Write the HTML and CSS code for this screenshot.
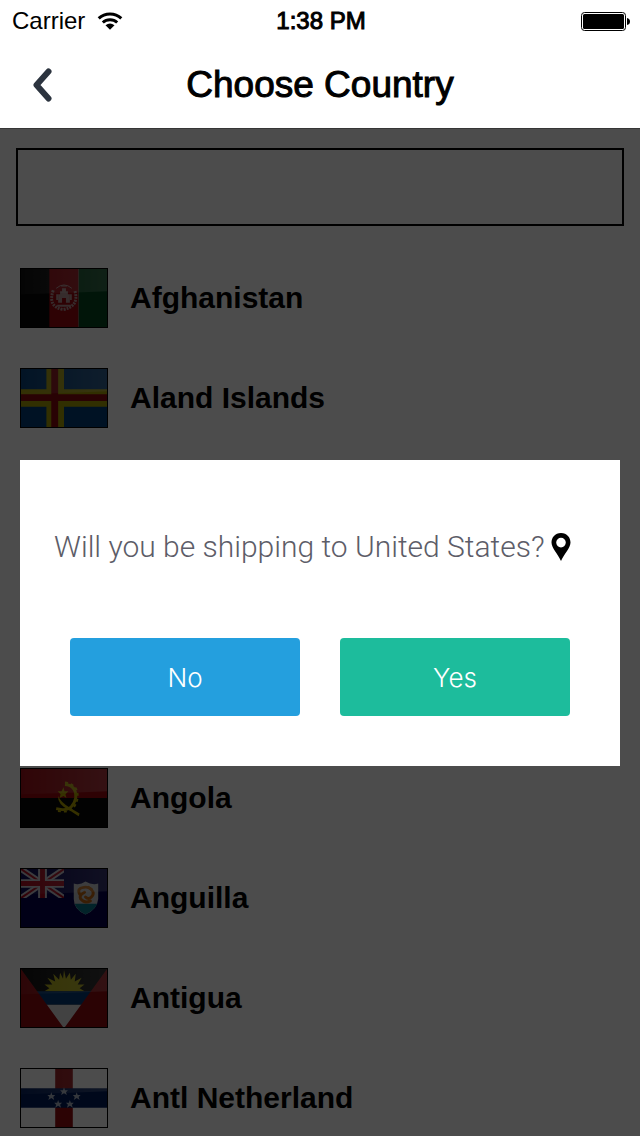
FILE: index.html
```html
<!DOCTYPE html>
<html lang="en">
<head>
<meta charset="utf-8">
<meta name="viewport" content="width=device-width">
<title>Choose Country</title>
<link rel="stylesheet" href="styles.css">
</head>
<body>
<header class="header">
  <div class="status">
    <div class="status-left">
      <span>Carrier</span>
      <svg class="wifi" viewBox="0 0 25 18" aria-hidden="true"><g fill="none" stroke="#000" stroke-width="3"><path d="M1.200 6.400C7.500.400 17.500.400 23.800 6.400"/><path d="M5.300 10.500C9.300 6.800 15.700 6.800 19.700 10.500"/></g><path d="M8 13.200Q12.500 9.600 17 13.200L12.500 17.800Z"/></svg>
    </div>
    <span class="time">1:38 PM</span>
    <svg class="battery" viewBox="0 0 50 20" aria-hidden="true"><rect x="1.500" y="1.500" width="44" height="18" rx="3" fill="none" stroke="#000"/><rect x="3" y="3" width="41" height="15" rx="1.500"/><path d="M47 7Q50 7.500 50 10.500Q50 13.500 47 14Z"/></svg>
  </div>
  <div class="nav">
    <button class="back" type="button" aria-label="Back"><svg viewBox="0 0 20 34" aria-hidden="true"><path d="M16.500 3.500L4.500 17L16.500 30.500" fill="none" stroke="#2c343f" stroke-width="6" stroke-linecap="round" stroke-linejoin="round"/></svg></button>
    <h1 class="title">Choose Country</h1>
  </div>
</header>
<main class="content">
  <svg class="defs" aria-hidden="true"><defs><linearGradient id="gloss" x1="0" y1="0" x2="1" y2="0"><stop offset="0" stop-color="#fff" stop-opacity=".04"/><stop offset="1" stop-color="#fff" stop-opacity=".2"/></linearGradient></defs></svg>
  <input class="search" type="text" aria-label="Search countries">
  <ul class="countries">
    <li class="country">
      <svg class="flag" viewBox="0 0 88 60" preserveAspectRatio="none" aria-hidden="true"><path fill="#080808" d="M0 0h30v60H0z"/><path fill="#9b0710" d="M29 0h30v60H29z"/><path fill="#04491f" d="M59 0h29v60H59z"/>
        <g fill="none" stroke="#b49494" stroke-width="3"><path stroke-dasharray="2 1" d="M33 22Q27 39 43 42Q60 39 55 22"/><path stroke-width="1" d="M36 20Q44 13 52 20"/></g><g fill="#b49494"><path d="M38 35V26h2v-3h2v-3h4v3h2v3h2v9h-4v-5h-4v5Z"/><path d="M36 26h2v6h-2zM50 26h2v6h-2zM41 17h6v1h-6zM37 37h14v2H37z"/></g>
        <path fill="url(#gloss)" d="M0 0H88V23Q44 25 0 26Z"/></svg>
      <span class="name">Afghanistan</span>
    </li>
    <li class="country">
      <svg class="flag" viewBox="0 0 88 60" preserveAspectRatio="none" aria-hidden="true"><path fill="#003c78" d="M0 0h88v60H0z"/><path fill="#a69d06" d="M26 0h18v21h44v18H44v21H26V39H0V21h26z"/><path fill="#8b0710" d="M31 0h7v26h50v7H38v27h-7V33H0v-7h31z"/><path fill="url(#gloss)" d="M0 0H88V23Q44 25 0 26Z"/></svg>
      <span class="name">Aland Islands</span>
    </li>
    <li class="country"></li>
    <li class="country"></li>
    <li class="country"></li>
    <li class="country">
      <svg class="flag" viewBox="0 0 88 60" preserveAspectRatio="none" aria-hidden="true"><path fill="#9b0810" d="M0 0h88v30H0z"/><path fill="#090909" d="M0 30h88v30H0z"/><path fill="none" stroke="#b5a500" stroke-width="3" d="M45 16Q57 17 56 30Q53 43 42 42L36 41"/><path fill="none" stroke="#b5a500" stroke-width="2" stroke-dasharray="3 3" d="M45 14Q59 16 58 30Q55 45 42 44L35 43"/><path fill="#b5a500" d="M38 28Q41 35 50 40L60 46L59 49L50 43Q37 37 38 28ZM43.500 19l1 4h4l-3 3 1 4-3-2-4 2 1-4-3-3h4Z"/><path fill="url(#gloss)" d="M0 0H88V23Q44 25 0 26Z"/></svg>
      <span class="name">Angola</span>
    </li>
    <li class="country">
      <svg class="flag" viewBox="0 0 88 60" preserveAspectRatio="none" aria-hidden="true"><path fill="#05034f" d="M0 0h88v60H0z"/><svg width="44" height="30" viewBox="0 0 44 30"><path stroke="#c5c5cf" stroke-width="6" d="M0 0L44 30M44 0L0 30"/><path stroke="#a9071c" stroke-width="2" d="M0 0L44 30M44 0L0 30"/><path stroke="#c5c5cf" stroke-width="9" d="M22 0V30M0 15H44"/><path stroke="#a9071c" stroke-width="5" d="M22 0V30M0 15H44"/></svg>
        <path fill="#c2c5c9" d="M54 15Q60 17 66 13Q73 17 79 15V31Q78 42 66 47Q54 42 54 31Z"/><path fill="#08758a" d="M55 36H78Q75 43 66 47Q57 43 55 36Z"/><g fill="none" stroke="#be6612" stroke-width="3" stroke-linecap="round"><path d="M60 26Q57 20 64 19Q69 18 72 21"/><path d="M69 19Q77 24 72 29Q69 32 66 29"/><path d="M71 33Q65 36 61 31Q59 27 65 24"/></g><path fill="url(#gloss)" d="M0 0H88V23Q44 25 0 26Z"/></svg>
      <span class="name">Anguilla</span>
    </li>
    <li class="country">
      <svg class="flag" viewBox="0 0 88 60" preserveAspectRatio="none" aria-hidden="true"><path fill="#080808" d="M0 0h88v60H0z"/><path fill="#b2ac0b" d="M24 23L29 20L24 16L32 16L27 9L35 13L33 5L39 11L40 4L43 10L44 1L46 10L50 4L51 11L56 5L55 13L62 9L58 16L65 16L60 20L65 23Z"/><path fill="#063b77" d="M0 23h88v14H0z"/><path fill="#dedede" d="M0 37h88v23H0z"/><path fill="#920b10" d="M0 0L43 60H0zM88 0L45 60H88z"/><path fill="url(#gloss)" d="M0 0H88V23Q44 25 0 26Z"/></svg>
      <span class="name">Antigua</span>
    </li>
    <li class="country">
      <svg class="flag" viewBox="0 0 88 60" preserveAspectRatio="none" aria-hidden="true"><path fill="#fff" d="M0 0h88v60H0z"/><path fill="#930b10" d="M35 0h18v60H35z"/><path fill="#001c5c" d="M0 20h88v20H0z"/><g fill="#aeb8c8"><path id="star" d="M44 19l1 3h3l-2 2 1 3-3-2-3 2 1-3-2-2h3Z"/><use href="#star" x="-13" y="5"/><use href="#star" x="13" y="5"/><use href="#star" x="-6" y="13"/><use href="#star" x="6" y="13"/></g><path fill="url(#gloss)" d="M0 0H88V23Q44 25 0 26Z"/></svg>
      <span class="name">Antl Netherland</span>
    </li>
  </ul>
  <div class="overlay">
    <section class="dialog" role="dialog" aria-modal="true" aria-labelledby="question">
      <div class="message">
        <p class="question" id="question">Will you be shipping to United States?</p>
        <svg class="pin" viewBox="0 0 20 28" aria-hidden="true"><path fill-rule="evenodd" d="M10 0C4 0 .500 4.500 .500 9.500C.500 15 7 21 10 28C13 21 19.500 15 19.500 9.500C19.500 4.500 16 0 10 0ZM10 4.800A4.800 4.800 0 1 1 10 14.400A4.800 4.800 0 1 1 10 4.800Z"/></svg>
      </div>
      <div class="actions">
        <button class="action no" type="button">No</button>
        <button class="action yes" type="button">Yes</button>
      </div>
    </section>
  </div>
</main>
</body>
</html>
```

FILE: styles.css
```css
* { box-sizing: border-box; }
html, body { height: 100%; }
body {
  margin: 0;
  display: flex;
  flex-direction: column;
  overflow: hidden;
  background: #fff;
  color: #000;
  font-family: "Liberation Sans", Arial, sans-serif;
}
.header { flex: none; }
.status {
  display: grid;
  grid-template-columns: 1fr auto 1fr;
  align-items: center;
  height: 42px;
  padding: 0 10px 0 12px;
  font-size: 24px;
  line-height: 40px;
}
.status-left { display: flex; align-items: center; gap: 12px; }
.wifi { width: 26px; height: 18px; }
.time { -webkit-text-stroke: 1px #000; }
.battery { width: 50px; height: 20px; justify-self: end; }
.nav {
  display: grid;
  grid-template-columns: 64px 1fr 64px;
  align-items: center;
  height: 86px;
}
.back {
  display: flex;
  align-items: center;
  height: 86px;
  padding: 0 0 0 32px;
  border: 0;
  background: none;
}
.back svg { width: 20px; height: 34px; }
.title {
  margin: 0;
  text-align: center;
  font-size: 37px;
  font-weight: 400;
  line-height: 44px;
  -webkit-text-stroke: 1px #000;
}
.content {
  position: relative;
  flex: 1;
  min-height: 0;
  overflow: hidden;
  padding: 19px 16px 0;
  border-top: 1px solid #363636;
}
.defs { position: absolute; width: 0; height: 0; }
.search {
  display: block;
  width: 100%;
  height: 78px;
  padding: 0 16px;
  border: 2px solid #000;
  border-radius: 0;
  background: #fff;
  font: 30px "Liberation Sans", Arial, sans-serif;
}
.countries { margin: 22px 0 0; padding: 0 4px; list-style: none; }
.country { display: flex; align-items: center; gap: 22px; height: 100px; }
.flag { width: 88px; height: 60px; border: 1px solid #000; }
.name { font-size: 30px; font-weight: 700; line-height: 40px; }
.overlay {
  position: absolute;
  inset: 0;
  padding: 331px 20px 0;
  background: rgba(0, 0, 0, 0.7);
}
.dialog { padding: 66px 34px 50px; background: #fff; }
.message { display: flex; align-items: center; gap: 6px; margin-bottom: 70px; }
.question {
  margin: 0;
  color: #5d5d68;
  font-family: Roboto, "Liberation Sans", sans-serif;
  font-size: 30px;
  font-weight: 300;
  line-height: 42px;
  white-space: nowrap;
}
.pin { flex: none; width: 20px; height: 28px; }
.actions { display: grid; grid-template-columns: 1fr 1fr; gap: 40px; padding: 0 16px; }
.action {
  height: 78px;
  border: 0;
  border-radius: 4px;
  color: #fff;
  font-family: Inter, "Liberation Sans", sans-serif;
  font-size: 26px;
  font-weight: 300;
}
.no { background: #249fde; }
.yes { background: #1dbc9c; }
```
